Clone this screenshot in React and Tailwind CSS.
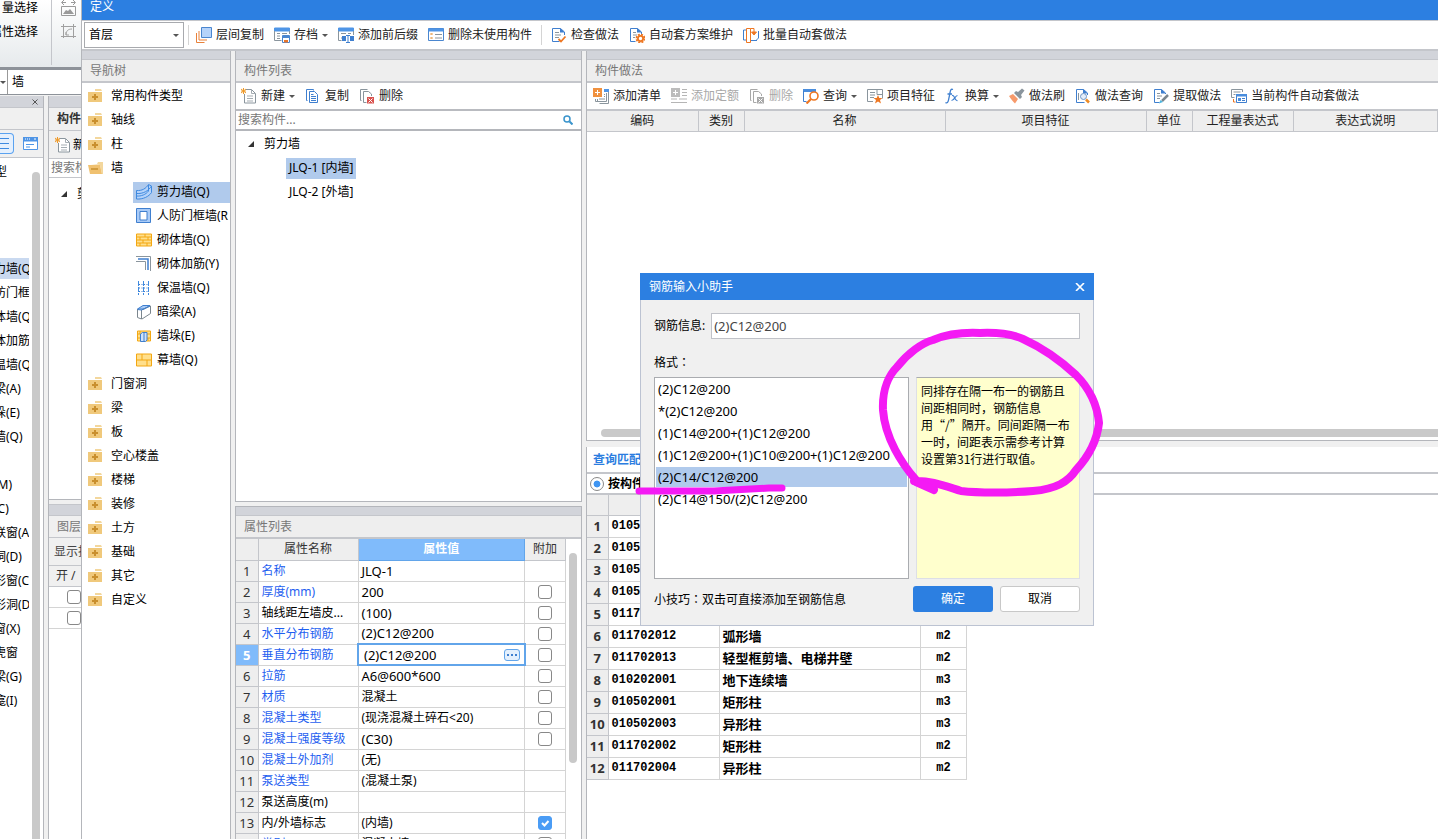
import { useState } from "react";

const bgTypes = [
  "",
  "",
  "",
  "剪力墙(Q",
  "人防门框",
  "砌体墙(Q",
  "砌体加筋",
  "保温墙(Q",
  "暗梁(A)",
  "墙垛(E)",
  "幕墙(Q)",
  "",
  "门(M)",
  "窗(C)",
  "门联窗(A",
  "墙洞(D)",
  "带形窗(C",
  "带形洞(D",
  "飘窗(X)",
  "老虎窗",
  "过梁(G)",
  "壁龛(I)",
];

const navItems = [
  { label: "常用构件类型" },
  { label: "轴线" },
  { label: "柱" },
  {
    label: "墙",
    children: [
      { label: "剪力墙(Q)", icon: "curvedWall" },
      { label: "人防门框墙(R", icon: "frameWall" },
      { label: "砌体墙(Q)", icon: "brick" },
      { label: "砌体加筋(Y)", icon: "rebar" },
      { label: "保温墙(Q)", icon: "insulation" },
      { label: "暗梁(A)", icon: "beam" },
      { label: "墙垛(E)", icon: "buttress" },
      { label: "幕墙(Q)", icon: "curtain" },
    ],
  },
  { label: "门窗洞" },
  { label: "梁" },
  { label: "板" },
  { label: "空心楼盖" },
  { label: "楼梯" },
  { label: "装修" },
  { label: "土方" },
  { label: "基础" },
  { label: "其它" },
  { label: "自定义" },
];

const properties = [
  { name: "名称", value: "JLQ-1", blue: true },
  { name: "厚度(mm)", value: "200", blue: true, check: true },
  { name: "轴线距左墙皮...", value: "(100)", check: true },
  { name: "水平分布钢筋", value: "(2)C12@200", blue: true, check: true },
  { name: "垂直分布钢筋", value: "(2)C12@200", blue: true, check: true, editing: true },
  { name: "拉筋", value: "A6@600*600", blue: true, check: true },
  { name: "材质", value: "混凝土", blue: true, check: true },
  { name: "混凝土类型", value: "(现浇混凝土碎石<20)", blue: true, check: true },
  { name: "混凝土强度等级", value: "(C30)", blue: true, check: true },
  { name: "混凝土外加剂", value: "(无)", blue: true },
  { name: "泵送类型", value: "(混凝土泵)", blue: true },
  { name: "泵送高度(m)", value: "" },
  { name: "内/外墙标志", value: "(内墙)", check: true, checked: true },
  { name: "类别", value: "混凝土墙", blue: true, check: true },
];

const quotaRows = [
  ["0105", "", ""],
  ["0105", "", ""],
  ["0105", "", ""],
  ["0105", "", ""],
  ["0117", "", ""],
  ["011702012", "弧形墙", "m2"],
  ["011702013", "轻型框剪墙、电梯井壁", "m2"],
  ["010202001", "地下连续墙", "m3"],
  ["010502001", "矩形柱", "m3"],
  ["010502003", "异形柱", "m3"],
  ["011702002", "矩形柱", "m2"],
  ["011702004", "异形柱", "m2"],
];

const formats = [
  "(2)C12@200",
  "*(2)C12@200",
  "(1)C14@200+(1)C12@200",
  "(1)C12@200+(1)C10@200+(1)C12@200",
  "(2)C14/C12@200",
  "(2)C14@150/(2)C12@200",
];

const icons = {
  copyFloor: (
    <>
      <path d="M.5 6v9.500h8M3 4v9h8" stroke="#e8813a" />
      <path d="M5.500.5h10v10h-10z" fill="#b5d3fa" stroke="#4a86cf" />
    </>
  ),
  archive: (
    <>
      <path d="M.5 1h15v3H.5z" fill="#4f95e6" stroke="#4f95e6" />
      <path d="M.5 4v9.500h7M15.500 4v3M3 6.500h3M3 9h3M3 11.500h3M8 6.500h5" stroke="#8a959d" />
      <path d="M8.500 8.500h7v7h-7z" fill="#fff" stroke="#4a86cf" />
      <path d="M9 9h6v2H9z" fill="#4a86cf" />
      <path d="M10 13h4v2.500h-4z" fill="#e8752a" />
    </>
  ),
  affix: (
    <>
      <path d="M.5 1h15v3H.5z" fill="#4f95e6" stroke="#4f95e6" />
      <path d="M.5 4v9.500h3M15.500 4v4M3 6.500h5M10 6.500h3M3 11h2" stroke="#8a959d" />
      <path d="M4 9h4v5H4zM12 9h4v5h-4z" fill="#3f7fcf" />
      <path d="M8 8.500h4M10 8.500v7M8 15.500h4" stroke="#3f7fcf" />
    </>
  ),
  unused: (
    <>
      <path d="M.5 1.500h15v12H.5z" fill="#fff" stroke="#4a86cf" />
      <path d="M.5 1.500h15v3H.5z" fill="#4f95e6" />
      <path d="M2.500 6l2 2m0-2l-2 2M2.500 10l2 2m0-2l-2 2" stroke="#e8a050" />
      <path d="M7 7.500h7M7 11h7" stroke="#8a959d" />
    </>
  ),
  checkDoc: (
    <>
      <path d="M13.500 8V5l-4-3.500h-8v13h7" stroke="#3f7fcf" />
      <path d="M9 1l5 4.500H9z" fill="#3f7fcf" />
      <path d="M4 5.500h4M4 8h6M4 10.500h4" stroke="#8a959d" />
      <path d="M7.500 12l2.500 2.500 4.500-5" stroke="#ee7722" strokeWidth="1.800" />
    </>
  ),
  gearDoc: (
    <>
      <path d="M12.500 7V5l-4-3.500h-7v13h5" stroke="#3f7fcf" />
      <path d="M8 1l5 4.500H8z" fill="#3f7fcf" />
      <path d="M4 5.500h3M4 8h4M4 10.500h2" stroke="#8a959d" />
      <circle cx="11.500" cy="11.500" r="4" stroke="#ee7722" strokeWidth="1.800" strokeDasharray="2 1.140" />
      <circle cx="11.500" cy="11.500" r="2.600" stroke="#ee7722" strokeWidth="1.800" />
    </>
  ),
  batch: (
    <>
      <path d="M3.500 3h-3v10h3M14 13.500H8M15.500 4v7l-3 3" stroke="#3f7fcf" />
      <path d="M3.500 1.500v14h4v-14zM7.500 1.500h3.500v4" stroke="#ee7722" />
      <path d="M8.500 5l2.500 3 2.500-3z" fill="#ee7722" stroke="#ee7722" />
    </>
  ),
  newDoc: (
    <>
      <path d="M5 1.500h5.500l4 4v9.500h-11V6" fill="#fff" stroke="#8a959d" />
      <path d="M10.500 1.500v4h4M6 8h6M6 10.500h6M6 13h6" stroke="#a5adb3" />
      <path d="M0 1l5 4M0 5l5-4M2.500 0v6M0 3h5" stroke="#ee9a2a" />
    </>
  ),
  copy: (
    <>
      <path d="M2.500 12.500h-1v-11h7v1" stroke="#3f7fcf" />
      <path d="M4.500 3.500h5l3 3v8h-8z" fill="#fff" stroke="#3f7fcf" />
      <path d="M6 6.500h2.500M6 8.500h5M6 10.500h5M6 12.500h5" stroke="#3f7fcf" />
    </>
  ),
  remove: (
    <>
      <path d="M2.500 12.500h-1v-11h7" stroke="#8a959d" />
      <path d="M12.500 8V6l-3-2.500h-5v11h3" stroke="#8a959d" />
      <path d="M8 9h7v6.500H8z" fill="#d9534f" />
      <path d="M9.500 10.500l4 4m0-4l-4 4" stroke="#fff" />
    </>
  ),
  removeOff: (
    <>
      <path d="M2.500 12.500h-1v-11h7" stroke="#a8a8a8" />
      <path d="M12.500 8V6l-3-2.500h-5v11h3" stroke="#a8a8a8" />
      <path d="M8 9h7v6.500H8z" fill="#a8a8a8" />
      <path d="M9.500 10.500l4 4m0-4l-4 4" stroke="#fff" />
    </>
  ),
  addList: (
    <>
      <path d="M11 1h5v3h-5z" fill="#4f95e6" />
      <path d="M15.500 4v11.500h-9M2.500 11v2.500h3M13.500 5v8.500h-9V11M11 6.500h1M11 8.500h1M6 11h6" stroke="#8a959d" />
      <path d="M0 0h9v9H0z" fill="#f0913f" />
      <path d="M4.500 2v5M2 4.500h5" stroke="#fff" />
    </>
  ),
  addQuota: (
    <>
      <path d="M11 1.500h5M11 4.500h5M11 7.500h5M8 11h8M0 11h6M0 14.500h16" stroke="#b5b5b5" />
      <path d="M0 0h9v9H0z" fill="#bcbcbc" />
      <path d="M4.500 2v5M2 4.500h5" stroke="#fff" />
    </>
  ),
  query: (
    <>
      <path d="M0 1h13v3H0z" fill="#4a8ddd" />
      <path d="M.5 3v10.500h3" stroke="#3f7fcf" />
      <circle cx="11" cy="8" r="4" fill="#fff" stroke="#ee7722" strokeWidth="1.600" />
      <path d="M8 11l-4.500 4.500" stroke="#ee7722" strokeWidth="2.200" />
    </>
  ),
  feature: (
    <>
      <path d="M6 13.500H.5v-12h15v9M3 4.500h5M3 7h5M3 9.500h4M10 1.500v5h5" stroke="#8a959d" />
      <path d="M11 7l1.300 3h3.200l-2.500 2 1 3.500-3-2-3 2 1-3.500-2.500-2h3.200z" fill="#ee7722" />
    </>
  ),
  fx: (
    <>
      <path d="M8 1.500C5.500.5 5.300 3 5 5L3.500 12c-.4 2.500-1.500 3.500-3 2.500M2.500 6h4.500" stroke="#3f7fcf" strokeWidth="1.300" />
      <path d="M7 7.500c3-1 2.500 6 5.500 5M12.500 7.500c-2.500 0-3 5-6 5" stroke="#3f7fcf" strokeWidth="1.200" />
    </>
  ),
  brush: (
    <>
      <path d="M0 8l4-2 5 5-3 4.500C4 14 2 11 0 8z" fill="#f79a6b" />
      <path d="M5 5l2-2 2 1 4-3.500 2.500 2L12 7l1 2-2 2z" fill="#8a959d" />
    </>
  ),
  searchDoc: (
    <>
      <path d="M12.500 7V5l-4-3.500h-7v13h8" stroke="#3f7fcf" />
      <path d="M8 1l5 4.500H8z" fill="#3f7fcf" />
      <circle cx="8.500" cy="8.500" r="3" fill="#e4eefb" stroke="#7096c4" />
      <path d="M11 11.500l3 3" stroke="#ee8a22" strokeWidth="2.500" />
      <path d="M3.500 5v7" stroke="#8a959d" />
    </>
  ),
  extract: (
    <>
      <path d="M12.500 6V5l-4-3.500h-7v13h5" stroke="#3f7fcf" />
      <path d="M8 1l5 4.500H8z" fill="#3f7fcf" />
      <path d="M4 5.500h3M4 8h5M4 10.500h3" stroke="#8a959d" />
      <path d="M9 13l6-6" stroke="#7b868e" strokeWidth="2.500" />
      <path d="M6 15.500l1.500-3.500L10 14z" fill="#4bb6e0" />
    </>
  ),
  autoApply: (
    <>
      <path d="M11.500 4V1.500H.5v8h3M2.500 4h7M2.500 6.500h2" stroke="#8a959d" />
      <path d="M2.500 11v3h2" stroke="#ee7722" />
      <path d="M5.500 6.500h10v8h-10z" fill="#fff" stroke="#3f7fcf" />
      <path d="M5 6h11v2.500H5zM7 10h3v3H7z" fill="#4a8ddd" />
      <path d="M11 10.500h3M11 12.500h3" stroke="#3f7fcf" />
    </>
  ),
  curvedWall: (
    <>
      <path d="M.5 6.500C6 7 10 4.500 12.500.5l3 1.500v6.500C13 12.500 7 15.500.5 15z" fill="#b5d3fa" stroke="#3f8ae0" />
      <path d="M.5 9.500C7 10 12.500 7 15.500 2M12.500 1v6C10 10.500 5 12.500.5 12" stroke="#3f8ae0" />
    </>
  ),
  frameWall: (
    <>
      <path d="M.5.5h14v14H.5z" fill="#a9cbf7" stroke="#3f7fcf" />
      <path d="M4 3.500h7v8.500H4z" fill="#fff" stroke="#3f7fcf" />
    </>
  ),
  brick: (
    <>
      <path d="M.5 2h15v12H.5z" fill="#ffdf8c" stroke="#f3a712" />
      <path d="M0 5h16M0 8h16M0 11h16M9 2v3M4 5v3M12 5v3M7 8v3M4 11v3M11 11v3" stroke="#f3a712" />
    </>
  ),
  rebar: (
    <>
      <path d="M0 .5h14.500V15M0 5.500h9.500V14" stroke="#8a959d" />
      <path d="M2 3h10v11" stroke="#3f7fcf" strokeWidth="1.500" />
    </>
  ),
  insulation: (
    <>
      <path d="M2.500 1v14M7.500 1v14M12.500 1v14" stroke="#3f8ae0" strokeDasharray="5 1" />
      <path d="M3 4.500h10M3 8h10M3 11.500h10" stroke="#3f7fcf" strokeDasharray="1 1.500" />
    </>
  ),
  beam: (
    <>
      <path d="M1.500 5L7 1.500h7L8 5z" fill="#a9cbf7" stroke="#3f7fcf" />
      <path d="M1.500 5v8.500l4 1.500V6l9-4v7.500L6 15" stroke="#7b868e" />
      <path d="M1.500 5.500l4 .5 8.500-4" stroke="#3f7fcf" />
    </>
  ),
  buttress: (
    <>
      <path d="M1.500 3h13v10h-13z" fill="#ffdf8c" stroke="#f3a712" />
      <path d="M1 6h14M1 10h14M4 3v3M12 10v3" stroke="#f3a712" />
      <path d="M4.500 6l2-1.500h4.500V12l-1.500 1.500h-5z" fill="#cfe2fb" stroke="#3f7fcf" />
      <path d="M8 5v8" stroke="#3f7fcf" />
    </>
  ),
  curtain: (
    <>
      <path d="M.5 2h15v12H.5z" fill="#ffdf8c" stroke="#f3a712" />
      <path d="M0 8h16M6 2v6M11 8v6" stroke="#f3a712" />
    </>
  ),
  folder: (
    <>
      <path d="M0 4h14v10H0z" fill="#f0c97c" />
      <path d="M7 1h6l1 2H7z" fill="#f3d79d" />
      <path d="M7 6v6M4 9h6" stroke="#c98f2e" strokeWidth="2" />
    </>
  ),
  folderOpen: (
    <>
      <path d="M3 4h6l1-2h5v12h-1L12 5z" fill="#f3d79d" />
      <path d="M0 5h12l2 9H2z" fill="#f0c170" />
      <path d="M3 9h7" stroke="#c98f2e" strokeWidth="1.500" />
    </>
  ),
  fitWidth: (
    <>
      <path d="M1 2.500h4M10 2.500h4M3 0L.5 2.500 3 5M12 0l2.500 2.500L12 5M.5 6.500h14v9H.5z" stroke="#9a9a9a" />
      <path d="M2 14l3-4 2 1 2-2 4 5z" fill="#9a9a9a" />
    </>
  ),
  rotate: (
    <>
      <path d="M0 2.500h15M2.500 0v14M0 12.500h15M12.500 0v14M5 11c0-4 2-6 6-6M5 8v3h3" stroke="#a0a0a0" />
    </>
  ),
  listView: <path d="M0 2.500h9M0 7.500h9M0 12.500h9" stroke="#3f8ae0" />,
  panelView: (
    <>
      <path d="M.5 1.500h14v12H.5z" fill="#fff" stroke="#4f95e6" />
      <path d="M0 1h15v4.500H0z" fill="#4f95e6" />
      <path d="M2 3h1M4 3h1M6 3h1M11 3h2" stroke="#fff" />
      <path d="M3 8.500h8M3 11h4" stroke="#4f95e6" />
    </>
  ),
};

function Icon({ name }) {
  return (
    <svg className="w-4 h-4 shrink-0" viewBox="0 0 16 16" fill="none" aria-hidden="true">
      {icons[name]}
    </svg>
  );
}

function Caret() {
  return (
    <svg className="w-[6px] h-[3px] shrink-0" viewBox="0 0 6 3" aria-hidden="true">
      <path d="M0 0h6L3 3z" fill="#555" />
    </svg>
  );
}

function TreeArrow() {
  return (
    <svg className="w-[6px] h-[6px] shrink-0" viewBox="0 0 6 6" aria-hidden="true">
      <path d="M6 0v6H0z" fill="#333" />
    </svg>
  );
}

function ToolButton({ icon, label, caret, disabled }) {
  return (
    <button
      disabled={disabled}
      className="flex items-center gap-1 px-[5px] h-5 shrink-0 whitespace-nowrap text-[#222] disabled:text-[#a8a8a8]"
    >
      <Icon name={icon} />
      <span>{label}</span>
      {caret && <Caret />}
    </button>
  );
}

function PanelTitle({ children }) {
  return (
    <>
      <div className="h-[9px] shrink-0 bg-[#d2d4da] border-b border-[#c4c6cb]" />
      <h2 className="h-[23px] shrink-0 px-2 flex items-center bg-[#eeeeee] border-b-2 border-[#c4c6cb] text-[#777]">
        {children}
      </h2>
    </>
  );
}

function CheckBox({ label, checked, onChange }) {
  return (
    <span className="relative inline-flex align-middle">
      <input
        type="checkbox"
        aria-label={label}
        checked={checked}
        onChange={onChange}
        className="appearance-none w-[14px] h-[14px] rounded-[3px] border border-[#888] bg-white checked:bg-[#4a9cf5] checked:border-[#4a9cf5]"
      />
      {checked && (
        <svg className="absolute inset-0 w-[14px] h-[14px] pointer-events-none" viewBox="0 0 14 14" fill="none">
          <path d="M4 7l2.500 2.500L10.500 5" stroke="#fff" strokeWidth="2" />
        </svg>
      )}
    </span>
  );
}

function BackgroundWindow() {
  return (
    <div className="w-[81px] shrink-0 overflow-hidden flex flex-col bg-[#f0f0f0] whitespace-nowrap">
      {/* Ribbon */}
      <div className="h-[69px] shrink-0 flex bg-linear-to-b from-white to-[#e6eaec] border-b-2 border-[#8d9299]">
        <div className="w-[38px] shrink-0 flex flex-col items-end">
          <span className="h-5 leading-4">量选择</span>
          <span className="h-6 leading-6">属性选择</span>
        </div>
        <div className="w-[14px] h-[65px] shrink-0 border-r border-[#c4c6cb]" />
        <div className="pl-[9px] flex flex-col gap-2">
          <Icon name="fitWidth" />
          <Icon name="rotate" />
        </div>
      </div>
      <div className="h-[26px] shrink-0 flex items-center bg-white border-y border-[#8d9299]">
        <span className="w-2 h-full border-r border-[#999] flex items-center">
          <Caret />
        </span>
        <span className="pl-1">墙</span>
      </div>
      <div className="flex-1 min-h-0 flex gap-1 pt-[1px]">
        {/* Type list */}
        <div className="w-11 shrink-0 flex flex-col overflow-hidden border-r border-[#b4b6bb]">
          <div className="h-3 shrink-0 flex items-center justify-end pr-[5px] bg-[#d2d4da] border-b border-[#c4c6cb]">
            <svg className="w-[6px] h-[6px]" viewBox="0 0 6 6" fill="none">
              <path d="M.5.5l5 5m0-5l-5 5" stroke="#555" />
            </svg>
          </div>
          <div className="h-[22px] shrink-0 border-b border-[#c4c6cb]" />
          <div className="h-7 shrink-0 flex items-center gap-[9px] border-b border-[#c4c6cb]">
            <span className="w-[14px] h-[21px] pt-[2px] shrink-0 rounded-r border border-l-0 border-[#5aa2f0] bg-[#e5f0fd] overflow-hidden">
              <Icon name="listView" />
            </span>
            <Icon name="panelView" />
          </div>
          <div className="flex-1 min-h-0 flex justify-between bg-white">
            <ul className="w-[29px] overflow-hidden pt-[2px]">
              <li className="h-6 leading-6 -ml-[5px]">型</li>
              {bgTypes.map((label, i) => (
                <li key={i} className="h-6 flex items-center">
                  <span
                    className={`h-[21px] leading-[21px] -ml-[18px] pr-4 ${label === "剪力墙(Q" ? "bg-[#c9d9f0]" : ""}`}
                  >
                    {label}
                  </span>
                </li>
              ))}
            </ul>
            <div className="w-2 mt-[14px] mr-[3px] rounded-t-full bg-[#c9c9c9]" />
          </div>
        </div>
        {/* Component and layer panels */}
        <div className="flex-1 min-w-0 flex flex-col border-l border-[#b4b6bb]">
          <div className="h-3 shrink-0 bg-[#d2d4da] border-b border-[#c4c6cb]" />
          <div className="h-[23px] shrink-0 pl-2 flex items-center font-bold text-[#333] border-b border-[#c4c6cb]">
            构件
          </div>
          <div className="h-7 shrink-0 pl-[6px] flex items-center gap-[2px] border-b border-[#c4c6cb]">
            <Icon name="newDoc" />
            <span>新</span>
          </div>
          <div className="h-[19px] shrink-0 pl-[2px] leading-[18px] bg-white text-[#777] border-b border-[#c4c6cb]">
            搜索构
          </div>
          <div className="h-[322px] shrink-0 pl-3 pt-1 bg-white border-b border-[#b4b6bb]">
            <div className="h-6 flex items-center gap-[10px]">
              <TreeArrow />
              <span>剪</span>
            </div>
          </div>
          <div className="h-1 shrink-0" />
          <div className="h-3 shrink-0 bg-[#d2d4da] border-y border-[#c4c6cb]" />
          <div className="h-[22px] shrink-0 pl-2 flex items-center text-[#777] border-b border-[#c4c6cb]">图层</div>
          <div className="h-7 shrink-0 pl-[5px] flex items-center text-[#444] border-b border-[#c4c6cb]">显示指</div>
          <div className="h-[21px] shrink-0 pl-[7px] flex items-center text-[#333] border-b border-[#c4c6cb]">
            开 /
          </div>
          <div className="flex-1 bg-white">
            {[1, 2].map((n) => (
              <div key={n} className="h-[21px] pl-[18px] flex items-center border-b border-[#d4d4d4]">
                <input
                  type="checkbox"
                  aria-label={`图层${n}`}
                  className="appearance-none w-[14px] h-[14px] shrink-0 rounded-[3px] border border-[#888] bg-white"
                />
              </div>
            ))}
          </div>
        </div>
      </div>
    </div>
  );
}

function NavTree() {
  return (
    <nav className="w-[149px] shrink-0 flex flex-col border-r border-[#b4b6bb]">
      <PanelTitle>导航树</PanelTitle>
      <ul className="flex-1 pt-px bg-white whitespace-nowrap overflow-hidden">
        {navItems.map((item) => (
          <li key={item.label}>
            <div className="h-6 pl-[6px] flex items-center gap-[7px]">
              <Icon name={item.children ? "folderOpen" : "folder"} />
              <span>{item.label}</span>
            </div>
            {item.children && (
              <ul className="pl-[51px]">
                {item.children.map((child, i) => (
                  <li key={child.label} className="h-6 flex items-center">
                    <div
                      className={`flex-1 h-[21px] pl-[3px] flex items-center gap-[5px] ${i === 0 ? "bg-[#b0caec]" : ""}`}
                    >
                      <Icon name={child.icon} />
                      <span>{child.label}</span>
                    </div>
                  </li>
                ))}
              </ul>
            )}
          </li>
        ))}
      </ul>
    </nav>
  );
}

function ComponentList() {
  return (
    <section className="min-h-0 flex flex-col border-x border-b border-[#b4b6bb] bg-white">
      <PanelTitle>构件列表</PanelTitle>
      <div className="h-7 shrink-0 flex items-center border-b-2 border-[#b9bbc0]">
        <ToolButton icon="newDoc" label="新建" caret />
        <ToolButton icon="copy" label="复制" />
        <ToolButton icon="remove" label="删除" />
      </div>
      <div className="h-[20px] shrink-0 flex items-center pr-2 border-b-2 border-[#b4b6bb]">
        <input
          type="text"
          aria-label="搜索构件"
          placeholder="搜索构件..."
          className="flex-1 min-w-0 px-[2px] outline-none placeholder:text-[#777]"
        />
        <svg className="w-[10px] h-[10px]" viewBox="0 0 10 10" fill="none" aria-hidden="true">
          <circle cx="4" cy="4" r="3" stroke="#3a94cc" strokeWidth="1.500" />
          <path d="M6.500 6.500L9.500 9.500" stroke="#3a94cc" strokeWidth="2" />
        </svg>
      </div>
      <ul className="pl-3 pt-[1px]">
        <li>
          <div className="h-6 flex items-center gap-[10px]">
            <TreeArrow />
            <span>剪力墙</span>
          </div>
          <ul className="pl-[38px]">
            <li className="h-6 flex items-center">
              <span className="h-[21px] leading-5 px-[3px] bg-[#b0caec]">JLQ-1 [内墙]</span>
            </li>
            <li className="h-6 flex items-center">
              <span className="px-[3px]">JLQ-2 [外墙]</span>
            </li>
          </ul>
        </li>
      </ul>
    </section>
  );
}

function PropertyList() {
  const [extra, setExtra] = useState(properties.map((p) => !!p.checked));

  return (
    <section className="min-h-0 flex flex-col border-x border-t border-[#b4b6bb] bg-white overflow-hidden">
      <PanelTitle>属性列表</PanelTitle>
      <div className="flex-1 min-h-0 flex overflow-hidden">
        <div className="flex-1 min-w-0">
          <table className="w-full table-fixed border-collapse whitespace-nowrap">
            <thead>
              <tr className="h-[21px] bg-[#eeeeee] text-[#333]">
                <th className="w-[22px] border-r border-b border-[#c4c6cb]" aria-label="序号"></th>
                <th className="w-[100px] border-r border-b border-[#c4c6cb] font-normal">属性名称</th>
                <th className="border border-t-0 border-[#62a5ea] bg-[#80bbfb] text-white">属性值</th>
                <th className="w-[41px] border-r border-b border-[#c4c6cb] font-normal">附加</th>
              </tr>
            </thead>
            <tbody>
              {properties.map((p, i) => (
                <tr key={p.name} className="h-[21px] leading-[18px]">
                  <td
                    className={`border-r border-b border-[#c4c6cb] text-center text-[13px] ${
                      p.editing ? "bg-[#80bbfb] text-white font-bold" : "bg-[#eeeeee] text-[#333]"
                    }`}
                  >
                    {i + 1}
                  </td>
                  <td className={`border-r border-b border-[#d4d4d4] pl-[3px] ${p.blue ? "text-[#1f5ff0]" : ""}`}>
                    {p.name}
                  </td>
                  {p.editing ? (
                    <td className="border-2 border-[#62a5ea] pl-[5px] pr-1">
                      <div className="flex items-center">
                        <input
                          type="text"
                          aria-label={p.name}
                          defaultValue={p.value}
                          className="flex-1 min-w-0 h-[17px] text-[13px] outline-none"
                        />
                        <button
                          aria-label="更多"
                          className="w-4 h-3 flex items-center justify-center gap-[2px] rounded-[3px] border border-[#62a5ea] bg-[#e4f0fd]"
                        >
                          <i className="w-[2px] h-[2px] bg-[#3f7fcf]" />
                          <i className="w-[2px] h-[2px] bg-[#3f7fcf]" />
                          <i className="w-[2px] h-[2px] bg-[#3f7fcf]" />
                        </button>
                      </div>
                    </td>
                  ) : (
                    <td
                      className={`border-r border-b border-[#d4d4d4] pl-[3px] ${
                        /[\u4e00-\u9fff]/.test(p.value) ? "" : "text-[13px]"
                      }`}
                    >
                      {p.value}
                    </td>
                  )}
                  <td className="border-r border-b border-[#d4d4d4] text-center leading-none">
                    {p.check && (
                      <CheckBox
                        label={`${p.name}附加`}
                        checked={extra[i]}
                        onChange={() => setExtra(extra.map((v, j) => (j === i ? !v : v)))}
                      />
                    )}
                  </td>
                </tr>
              ))}
            </tbody>
          </table>
        </div>
        <div className="w-[15px] shrink-0 pt-[14px] pl-[3px]">
          <div className="w-2 h-[210px] rounded-full bg-[#c9c9c9]" />
        </div>
      </div>
    </section>
  );
}

function PracticePanel() {
  return (
    <section className="min-h-0 flex flex-col border-l border-b border-[#b4b6bb] bg-white overflow-hidden">
      <PanelTitle>构件做法</PanelTitle>
      <div className="h-7 shrink-0 pl-px flex items-center border-b-2 border-[#c4c6cb]">
        <ToolButton icon="addList" label="添加清单" />
        <ToolButton icon="addQuota" label="添加定额" disabled />
        <ToolButton icon="removeOff" label="删除" disabled />
        <ToolButton icon="query" label="查询" caret />
        <ToolButton icon="feature" label="项目特征" />
        <ToolButton icon="fx" label="换算" caret />
        <ToolButton icon="brush" label="做法刷" />
        <ToolButton icon="searchDoc" label="做法查询" />
        <ToolButton icon="extract" label="提取做法" />
        <ToolButton icon="autoApply" label="当前构件自动套做法" />
      </div>
      <table className="w-full table-fixed border-collapse">
        <thead>
          <tr className="h-5 bg-[#eeeeee] text-[#222] *:font-normal *:border-b *:border-r *:border-[#c4c6cb]">
            <th className="w-[111px]">编码</th>
            <th className="w-[46px]">类别</th>
            <th className="w-[201px]">名称</th>
            <th className="w-[201px]">项目特征</th>
            <th className="w-[46px]">单位</th>
            <th className="w-[101px]">工程量表达式</th>
            <th>表达式说明</th>
          </tr>
        </thead>
      </table>
      <div className="mt-auto mb-[3px] ml-[14px] h-2 shrink-0 rounded-l-full bg-[#c9c9c9]" />
    </section>
  );
}

function QueryPanel() {
  return (
    <section className="min-h-0 flex flex-col border-l border-[#b4b6bb] bg-white overflow-hidden">
      <div className="h-[27px] shrink-0 flex items-center pl-[6px] border-b-2 border-[#c4c6cb]">
        <button className="font-bold text-[#2b7de0]">查询匹配</button>
      </div>
      <label className="h-[21px] shrink-0 flex items-center gap-1 pl-[3px] border-b-2 border-[#c4c6cb] font-bold">
        <input
          type="radio"
          name="filter"
          defaultChecked
          className="appearance-none w-[14px] h-[14px] rounded-full border border-[#888] bg-[radial-gradient(#3f95f2_35%,white_45%)]"
        />
        按构件
      </label>
      <table className="w-[380px] table-fixed border-collapse font-bold whitespace-nowrap">
        <thead>
          <tr className="h-5 bg-[#eeeeee] *:border-b *:border-r *:border-[#c4c6cb]">
            <th className="w-[21px]" aria-label="序号"></th>
            <th className="w-[111px]" aria-label="编码"></th>
            <th aria-label="名称"></th>
            <th className="w-[46px]" aria-label="单位"></th>
          </tr>
        </thead>
        <tbody>
          {quotaRows.map(([code, name, unit], i) => (
            <tr key={i} className="h-[22px] leading-5">
              <td className="bg-[#eeeeee] border-r border-b border-[#c4c6cb] text-center text-[13px] text-[#333]">
                {i + 1}
              </td>
              <td className="border-r border-b border-[#d4d4d4] pl-[3px] align-top font-['Liberation_Mono','Noto_Sans_CJK_SC',monospace]">
                {code}
              </td>
              <td className="border-r border-b border-[#d4d4d4] pl-[3px] align-top text-[13px]">{name}</td>
              <td className="border-r border-b border-[#d4d4d4] text-center align-top font-['Liberation_Mono',monospace]">
                {unit}
              </td>
            </tr>
          ))}
        </tbody>
      </table>
    </section>
  );
}

function RebarDialog() {
  const [selected, setSelected] = useState(4);

  return (
    <div
      role="dialog"
      aria-label="钢筋输入小助手"
      className="absolute left-[640px] top-[273px] w-[454px] flex flex-col bg-[#f0f0f0] border border-[#bcc3d2] border-t-0"
    >
      <div className="h-[27px] -mx-[1px] px-[9px] flex items-center justify-between bg-[#2c7fe1] text-white">
        <h2>钢筋输入小助手</h2>
        <button aria-label="关闭">
          <svg className="w-[10px] h-[8px]" viewBox="0 0 10 8" fill="none">
            <path d="M1 0l8 8M9 0L1 8" stroke="#fff" strokeWidth="1.600" />
          </svg>
        </button>
      </div>
      <div className="px-[13px] pt-[13px] pb-[13px]">
        <div className="flex items-center gap-[6px]">
          <label htmlFor="rebar">钢筋信息:</label>
          <input
            id="rebar"
            type="text"
            defaultValue="(2)C12@200"
            className="flex-1 min-w-0 h-[26px] px-[2px] text-[13px] text-[#444] bg-white border border-[#c0c2c8] outline-none"
          />
        </div>
        <p className="h-[38px] leading-[46px] font-['Noto_Sans_CJK_TC',sans-serif]">格式：</p>
        <div className="flex gap-[7px] h-[202px]">
          <ul className="flex-1 bg-white border border-[#aaacb0] px-[1px] pt-[1px] text-[13px]">
            {formats.map((f, i) => (
              <li key={f} className="h-[22px]">
                <button
                  onClick={() => setSelected(i)}
                  className={`w-full h-5 leading-5 px-[2px] text-left ${i === selected ? "bg-[#b0caec]" : ""}`}
                >
                  {f}
                </button>
              </li>
            ))}
          </ul>
          <p className="w-[164px] px-1 pt-1 leading-[17px] whitespace-nowrap bg-[#ffffcd] border border-[#dddfe6] border-t-[#aaacb0] font-['Noto_Sans_CJK_SC',sans-serif]">
            同排存在隔一布一的钢筋且
            <br />
            间距相同时，钢筋信息
            <br />
            用“/”隔开。同间距隔一布
            <br />
            一时，间距表示需参考计算
            <br />
            设置第31行进行取值。
          </p>
        </div>
        <div className="flex items-center gap-[7px] pt-[7px]">
          <span className="flex-1">
            小技巧<span className="font-['Noto_Sans_CJK_TC',sans-serif]">：</span>双击可直接添加至钢筋信息
          </span>
          <button className="w-20 h-[26px] rounded-[3px] bg-[#2c7fe1] text-white">确定</button>
          <button className="w-20 h-[26px] rounded-[3px] bg-white border border-[#c8c8c8]">取消</button>
        </div>
      </div>
    </div>
  );
}

function Markup() {
  return (
    <svg
      className="absolute left-0 top-0 w-[1438px] h-[839px] pointer-events-none"
      viewBox="0 0 1438 839"
      fill="none"
      stroke="#f41af4"
      strokeWidth="8"
      strokeLinecap="round"
      strokeLinejoin="round"
    >
      <path d="M916 480C902 464 885 438 883 410 882 388 890 374 897 367 908 353 922 343 933 340 945 335 960 332 980 333 1003 332 1014 335 1023 339 1045 349 1062 362 1076 375 1088 387 1097 402 1099 423 1097 441 1089 456 1076 470 1068 482 1056 489 1033 491 1010 493 978 493 961 491 945 486 930 480 914 481" />
      <path d="M916 482L934 490" />
      <path d="M639 491H714L769 488 782 488" strokeWidth="7" />
    </svg>
  );
}

export default function App() {
  return (
    <div className="relative h-screen overflow-hidden flex bg-white text-black text-[12px] leading-4 font-['Noto_Sans','Noto_Sans_CJK_SC',sans-serif]">
      <BackgroundWindow />
      <main className="flex-1 min-w-0 flex flex-col border-l border-[#b4b6bb] bg-[#f0f0f0]">
        {/* Title bar */}
        <h1 className="h-5 shrink-0 pl-2 leading-[14px] bg-[#2c7fe1] text-white">定义</h1>

        {/* Main toolbar */}
        <div className="h-[31px] shrink-0 pl-[2px] flex items-center bg-white border-t border-b-2 border-[#c4c6cb]">
          <div className="relative w-[100px] h-[26px] shrink-0 mr-1">
            <select
              aria-label="楼层"
              className="appearance-none w-full h-full px-1 text-[12px] bg-white border border-[#a8aaae] outline-none"
            >
              <option>首层</option>
            </select>
            <span className="absolute right-[5px] top-0 h-full flex items-center pointer-events-none">
              <Caret />
            </span>
          </div>
          <div className="w-px h-5 bg-[#d4d4d4] mr-[2px]" />
          <ToolButton icon="copyFloor" label="层间复制" />
          <ToolButton icon="archive" label="存档" caret />
          <ToolButton icon="affix" label="添加前后缀" />
          <ToolButton icon="unused" label="删除未使用构件" />
          <div className="w-px h-5 bg-[#d4d4d4] mx-1" />
          <ToolButton icon="checkDoc" label="检查做法" />
          <ToolButton icon="gearDoc" label="自动套方案维护" />
          <ToolButton icon="batch" label="批量自动套做法" />
        </div>

        {/* Panels */}
        <div className="flex-1 min-h-0 flex">
          <NavTree />
          <div className="w-[347px] shrink-0 ml-1 grid grid-rows-[451fr_333fr] gap-[4px]">
            <ComponentList />
            <PropertyList />
          </div>
          <div className="flex-1 min-w-0 ml-1 grid grid-rows-[390fr_392fr] gap-[6px]">
            <PracticePanel />
            <QueryPanel />
          </div>
        </div>
      </main>
      <RebarDialog />
      <Markup />
    </div>
  );
}
